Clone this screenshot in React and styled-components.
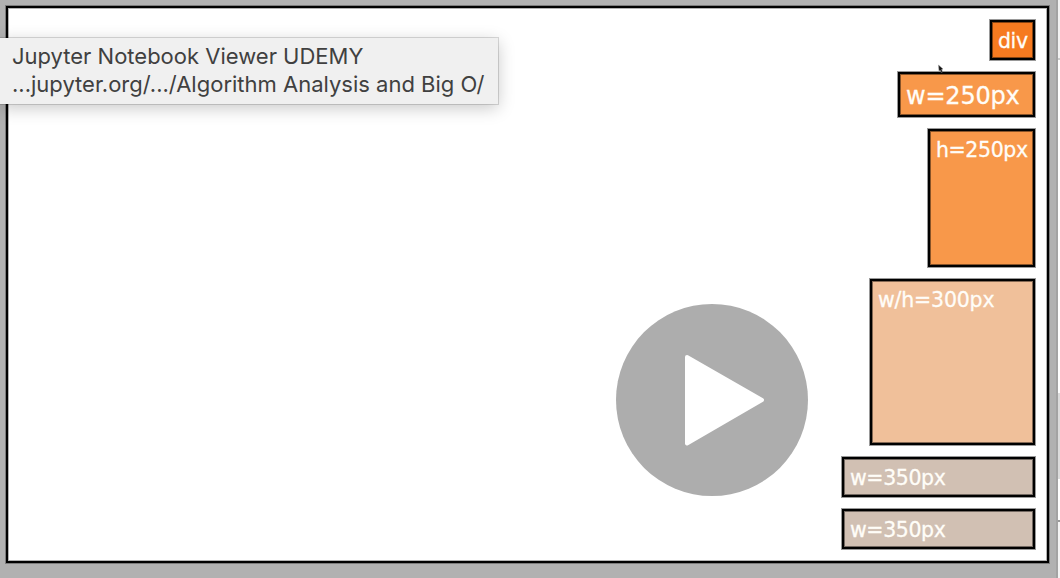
import React from 'react';
import styled, { createGlobalStyle } from 'styled-components';

const GlobalStyle = createGlobalStyle`
  *, *::before, *::after { box-sizing: border-box; }
  body { margin: 0; background: #b1b1b1; overflow: hidden; }
`;

const Page = styled.div`
  position: relative;
  display: flex;
  width: 1060px;
  height: 578px;
  overflow: hidden;
  background: #b1b1b1;
`;

const Stage = styled.main`
  flex: 1;
  padding: 6px 7px 15px 6px;
  border-right: 2px solid #a3a3a3;
`;

const Canvas = styled.section`
  display: flex;
  flex-direction: column;
  align-items: flex-end;
  gap: 12px;
  width: 1043px;
  height: 557px;
  padding: 12px;
  background: #fff;
  border: 2px solid #000;
  box-shadow: 0 0 0 1px rgba(0, 0, 0, 0.3), inset 0 0 0 1px rgba(0, 0, 0, 0.3);
`;

const Box = styled.div`
  width: ${(p) => p.$w}px;
  height: ${(p) => p.$h}px;
  flex: none;
  padding: ${(p) => p.$top || 7}px 0 0 6px;
  border: 2px solid #000;
  box-shadow: 0 0 0 1px rgba(0, 0, 0, 0.4), inset 0 0 0 1px rgba(0, 0, 0, 0.45);
  background: ${(p) => p.$color};
  color: #fffdf8;
  font: ${(p) => p.$size || 20.5}px/24px 'DejaVu Sans', Verdana, sans-serif;
  letter-spacing: ${(p) => p.$track || -0.4}px;
  -webkit-text-stroke: 0.3px #fffdf8;
  white-space: nowrap;
`;

const Strip = styled.aside`
  display: flex;
  flex-direction: column;
  width: 2px;
`;

const Band = styled.div`
  height: ${(p) => p.$h}px;
  background: ${(p) => p.$color};
`;

const Tooltip = styled.div`
  position: absolute;
  left: -1px;
  top: 38px;
  width: 499px;
  height: 66px;
  padding: 4px 0 0 13px;
  background: #f0f0f0;
  box-shadow: 0 0 0 1px rgba(0, 0, 0, 0.14), 0 4px 16px rgba(0, 0, 0, 0.22);
  color: #404040;
  font: 22px/28px Inter, 'Liberation Sans', sans-serif;
  white-space: nowrap;
`;

const Line = styled.div`
  height: 28px;
`;

const PlayButton = styled.button`
  position: absolute;
  left: 616px;
  top: 304px;
  width: 192px;
  height: 192px;
  padding: 0;
  border: 0;
  border-radius: 50%;
  background: #adadad;
  svg { display: block; }
`;

const Pointer = styled.svg`
  position: absolute;
  left: 937px;
  top: 64px;
`;

const boxes = [
  { label: 'div', $w: 45, $h: 40, $color: '#f67a20' },
  { label: 'w=250px', $w: 137, $h: 45, $color: '#f8984a', $size: 24, $top: 10, $track: -0.2 },
  { label: 'h=250px', $w: 107, $h: 138, $color: '#f8984a' },
  { label: 'w/h=300px', $w: 165, $h: 166, $color: '#f0c09a', $track: -0.2 },
  { label: 'w=350px', $w: 193, $h: 40, $color: '#d1c0b3' },
  { label: 'w=350px', $w: 193, $h: 40, $color: '#d1c0b3' },
];

const bands = [
  [58, '#f3f3f3'],
  [2, '#cccccc'],
  [333, '#ffffff'],
  [86, '#dcdcdc'],
  [41, '#ffffff'],
  [2, '#999999'],
  [56, '#f4f4f4'],
];

export default function App() {
  return (
    <>
      <GlobalStyle />
      <Page>
        <Stage>
          <Canvas>
            {boxes.map(({ label, ...box }, i) => (
              <Box key={i} {...box}>{label}</Box>
            ))}
          </Canvas>
        </Stage>
        <Strip>
          {bands.map(([h, color], i) => (
            <Band key={i} $h={h} $color={color} />
          ))}
        </Strip>
        <Tooltip>
          <Line>Jupyter Notebook Viewer UDEMY</Line>
          <Line>...jupyter.org/.../Algorithm Analysis and Big O/</Line>
        </Tooltip>
        <PlayButton aria-label="Play">
          <svg width="192" height="192" viewBox="0 0 192 192">
            <path d="M71 53L146 96L71 139.5Z" fill="#fff" stroke="#fff" strokeWidth="4" strokeLinejoin="round" />
          </svg>
        </PlayButton>
        <Pointer width="8" height="10" viewBox="0 0 8 10">
          <path d="M1.5 1L6 5L4.6 5.4L5.6 8L4 8.4L3.2 6.2L2 7Z" fill="#111" stroke="#999" strokeWidth="0.5" />
        </Pointer>
      </Page>
    </>
  );
}
